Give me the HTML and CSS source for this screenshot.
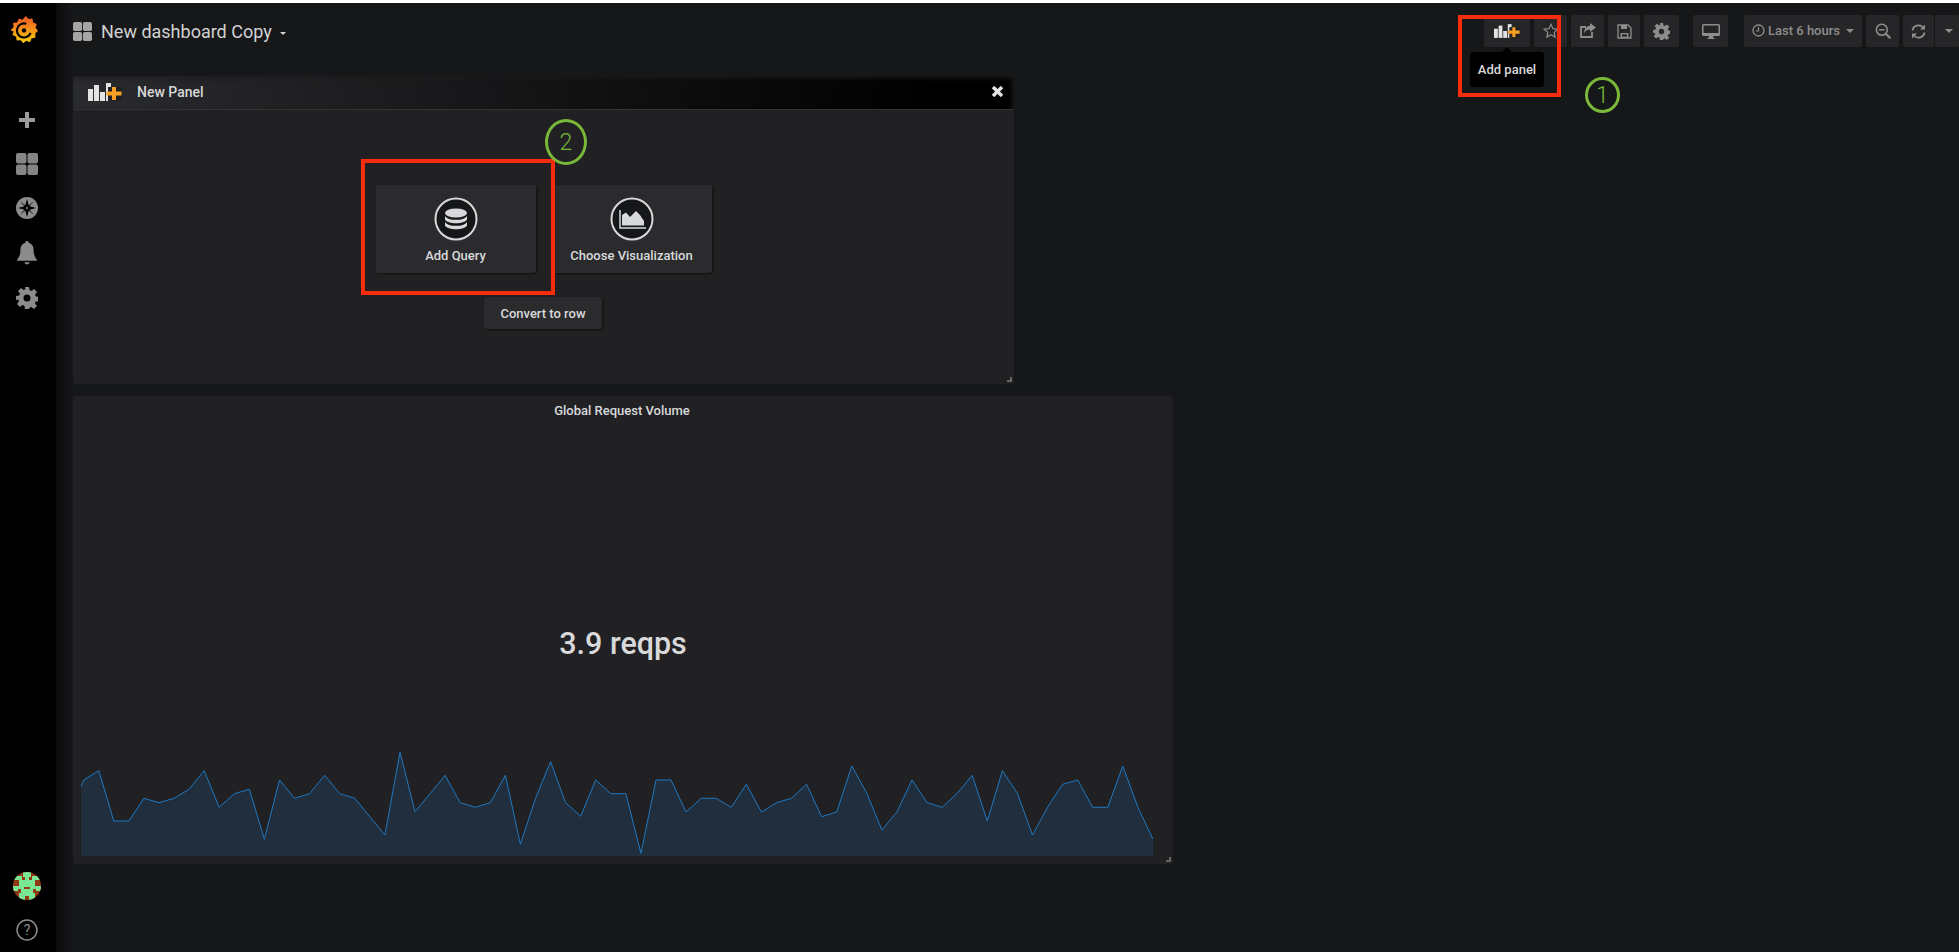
FILE: index.html
```html
<!DOCTYPE html>
<html>
	<head>
		<title>New dashboard Copy - Grafana</title>
		<link rel="stylesheet" href="styles.css">
	</head>
	<body>
		<div class="top-strip"></div>
		<div class="app">
			<aside class="sidemenu">
				<div class="side-top">
					<svg class="logo" viewBox="0 0 32 32" width="30" height="32">
						<defs><linearGradient id="logo-grad" x1="0" y1="1" x2="0" y2="0"><stop offset="0" stop-color="#fbca0a"/><stop offset="1" stop-color="#f05a28"/></linearGradient></defs>
						<path fill="url(#logo-grad)" stroke="url(#logo-grad)" stroke-width="1.500" stroke-linejoin="round" d="M18 2l2.500 3 4-.5.500 4 3.800 1.500-1.300 3.700 2.500 3-2.800 2.800.3 4-4 .7-1.500 3.800-3.700-1.500-3 2.500-2.500-3.100-4 .6-.6-4-3.700-1.500 1.300-3.700L3 16l2.700-3-.5-4 4-.6L11 4.700l3.500 1.400z"/>
						<circle cx="16" cy="16.500" r="7.500" fill="none" stroke="#000" stroke-width="2.300" stroke-dasharray="35 12" transform="rotate(20 16 16.500)"/>
						<circle cx="16" cy="16.500" r="2.300" fill="#000"/>
					</svg>
					<nav class="side-icons">
						<svg width="22" height="22" viewBox="0 0 22 22"><path fill="#9a9a9a" d="M9 3h4v6h6v4h-6v6H9v-6H3V9h6z"/></svg>
						<svg width="22" height="22" viewBox="0 0 22 22" fill="#858585"><rect width="10.500" height="10.500" rx="2"/><rect x="11.500" width="10.500" height="10.500" rx="2"/><rect y="11.500" width="10.500" height="10.500" rx="2"/><rect x="11.500" y="11.500" width="10.500" height="10.500" rx="2"/></svg>
						<svg width="22" height="22" viewBox="0 0 22 22"><circle cx="11" cy="11" r="11" fill="#8c8c8c"/><path fill="#000" d="M11 2l1.800 6.500L18 4l-4.500 5.200L20 11l-6.500 1.800L18 18l-5.200-4.500L11 20l-1.800-6.500L4 18l4.500-5.200L2 11l6.500-1.800L4 4l5.200 4.500z"/><circle cx="11" cy="11" r="1" fill="#8c8c8c"/></svg>
						<svg width="22" height="24" viewBox="0 0 18 22"><path fill="#8c8c8c" d="M9 0a1.500 1.500 0 0 1 1.500 1.700C13.500 2.400 15 5 15 8c0 5 1.500 7 3 9v1H0v-1c1.500-2 3-4 3-9 0-3 1.500-5.600 4.500-6.300A1.500 1.500 0 0 1 9 0zM6.500 19.500h5A2.600 2.600 0 0 1 9 21.500a2.600 2.600 0 0 1-2.500-2z"/></svg>
						<svg width="22" height="22" viewBox="0 0 22 22"><use href="#gear"/></svg>
					</nav>
				</div>
				<div class="side-bottom">
					<svg class="avatar" width="28" height="28" viewBox="0 0 28 28">
						<clipPath id="avatar-clip"><circle cx="14" cy="14" r="14"/></clipPath>
						<g clip-path="url(#avatar-clip)">
							<rect width="28" height="28" fill="#8f3a14"/>
							<path fill="#79e793" d="M10 0h8v5h-2v3h3V4h9v4h-6v6h6v5h-5v-2h-3v4h2v7h-6v-4h-4v4H6v-7h2v-4H5v2H0v-5h6V8H0V4h9v4h3V5h-2z"/>
							<rect x="11" y="15" width="6" height="2" fill="#8f3a14"/>
						</g>
					</svg>
					<svg width="22" height="22" viewBox="0 0 22 22"><circle cx="11" cy="11" r="10" fill="none" stroke="#8c8c8c" stroke-width="1.500"/><text class="help-mark" x="11" y="16" text-anchor="middle">?</text></svg>
				</div>
			</aside>
			<main class="dashboard">
				<header class="navbar">
					<div class="nav-title">
						<svg width="19" height="19" viewBox="0 0 22 22" fill="#a5a5a5"><rect width="10.500" height="10.500" rx="2"/><rect x="11.500" width="10.500" height="10.500" rx="2"/><rect y="11.500" width="10.500" height="10.500" rx="2"/><rect x="11.500" y="11.500" width="10.500" height="10.500" rx="2"/></svg>
						<span class="dash-name">New dashboard Copy</span>
						<span class="caret-small"></span>
					</div>
					<div class="nav-buttons">
						<button class="nav-btn btn-add">
							<svg width="26" height="18" viewBox="0 0 34 18"><use href="#add-panel-icon"/></svg>
						</button>
						<button class="nav-btn btn-star"><svg width="16" height="16" viewBox="0 0 16 16"><path fill="none" stroke="#8e8e8e" stroke-width="1.200" d="M8 1.300l2 4.400 4.800.5-3.600 3.200 1 4.700L8 11.700l-4.200 2.400 1-4.700L1.200 6.200 6 5.700z"/></svg></button>
						<button class="nav-btn btn-share"><svg width="18" height="16" viewBox="0 0 18 16"><path fill="none" stroke="#8e8e8e" stroke-width="1.800" d="M13 9v5H2V4h5"/><path fill="#8e8e8e" d="M11 0l6 4.500L11 9V6.500C8 6.500 6 8 5 10.500 5 6 7.500 3 11 2.700z"/></svg></button>
						<button class="nav-btn btn-save"><svg width="15" height="15" viewBox="0 0 15 15"><path fill="none" stroke="#8e8e8e" stroke-width="1.300" d="M1 1h10l3 3v10H1z"/><path fill="#8e8e8e" d="M4 1h6v4H4zM3.500 9h8v5h-8z"/><rect x="5" y="10.300" width="5" height="2.400" fill="#2b2b2e"/></svg></button>
						<button class="nav-btn btn-gear"><svg width="17" height="17" viewBox="0 0 22 22"><use href="#gear"/></svg></button>
						<button class="nav-btn btn-tv"><svg width="18" height="15" viewBox="0 0 18 15"><path fill="#8e8e8e" d="M1.500 0h15A1.500 1.500 0 0 1 18 1.500v9a1.500 1.500 0 0 1-1.500 1.500H11l.5 2h1v1h-7v-1h1l.5-2H1.500A1.500 1.500 0 0 1 0 10.500v-9A1.500 1.500 0 0 1 1.500 0zM1.500 1.500V9h15V1.500z"/></svg></button>
						<button class="nav-btn btn-time">
							<svg width="13" height="13" viewBox="0 0 13 13"><circle cx="6.500" cy="6.500" r="5.500" fill="none" stroke="#8e8e8e" stroke-width="1.300"/><path fill="none" stroke="#8e8e8e" stroke-width="1.200" d="M6.500 3v4H4"/></svg>
							<span>Last 6 hours</span>
							<span class="caret"></span>
						</button>
						<button class="nav-btn btn-zoom"><svg width="16" height="16" viewBox="0 0 16 16"><circle cx="6.800" cy="6.800" r="5.500" fill="none" stroke="#8e8e8e" stroke-width="1.600"/><path stroke="#8e8e8e" stroke-width="2" d="M10.800 10.800l4.500 4.500"/><path stroke="#8e8e8e" stroke-width="1.500" d="M4 6.800h5.600"/></svg></button>
						<div class="btn-group">
							<button class="nav-btn btn-refresh"><svg width="15" height="15" viewBox="0 0 15 15"><path fill="none" stroke="#8e8e8e" stroke-width="1.800" d="M1.500 6.500A6 6 0 0 1 12 3.500M13.500 8.500A6 6 0 0 1 3 11.500"/><path fill="#8e8e8e" d="M14 .5v5h-5zM1 14.500v-5h5z"/></svg></button>
							<button class="nav-btn btn-drop"><span class="caret"></span></button>
						</div>
					</div>
				</header>

				<section class="panel panel-new">
					<div class="panel-head">
						<svg width="34" height="18" viewBox="0 0 34 18"><use href="#add-panel-icon"/></svg>
						<span class="panel-head-title">New Panel</span>
						<svg class="panel-close" width="11" height="11" viewBox="0 0 11 11"><path stroke="#e4e4e4" stroke-width="3.400" d="M1 1l9 9M10 1l-9 9"/></svg>
					</div>
					<div class="panel-body">
						<div class="action-row">
							<button class="action-card">
								<svg width="44" height="44" viewBox="0 0 44 44"><circle cx="22" cy="22" r="20.500" fill="#161719" stroke="#d8d9da" stroke-width="2"/><g fill="#d8d9da"><ellipse cx="22" cy="16" rx="11" ry="4.500"/><path d="M11 19c2 3 6 3.800 11 3.800S31 22 33 19v3.500c-1.500 2.500-6 3.700-11 3.700s-9.500-1.200-11-3.700z"/><path d="M11 25c2 3 6 3.800 11 3.800S31 28 33 25v3.500c-1.500 2.500-6 3.700-11 3.700s-9.500-1.200-11-3.700z"/></g></svg>
								<span>Add Query</span>
							</button>
							<button class="action-card">
								<svg width="44" height="44" viewBox="0 0 44 44"><circle cx="22" cy="22" r="20.500" fill="#161719" stroke="#d8d9da" stroke-width="2"/><path fill="#d8d9da" d="M12 28.500V18l4-2.500 4 4.500 6-6 4 4 4 6v4.500z"/><path fill="none" stroke="#d8d9da" stroke-width="1.500" d="M10 13v18h26"/></svg>
								<span>Choose Visualization</span>
							</button>
						</div>
						<button class="row-btn">Convert to row</button>
					</div>
					<span class="resize-handle"></span>
				</section>

				<section class="panel panel-stat">
					<div class="stat-title">Global Request Volume</div>
					<div class="stat-value">3.9 reqps</div>
					<svg class="spark" width="1072" height="116" viewBox="0 0 1072 116">
						<polygon fill="#1f78c1" fill-opacity=".16" points="0,116 0,46.700 2.700,40 17.800,30.700 32.800,81 47.900,81 62.900,58.300 78,62.700 93.100,58.300 108.100,49.300 123.200,30.700 138.200,67.300 153.300,53.700 168.400,49.300 183.400,99.300 198.500,40 213.500,58.300 228.600,53.700 243.700,35.300 258.700,53.700 273.800,58.300 288.800,76.700 303.900,95 319,12.300 334,71.700 349.100,53.700 364.100,35.300 379.200,62.700 394.300,67.300 409.300,62.700 424.400,35.300 439.400,104.300 454.500,58.300 469.600,21.700 484.600,62.700 499.700,76.300 514.700,40 529.800,53.700 544.900,53.700 559.900,113.300 575,40 590,40 605.100,72 620.200,58.300 635.200,58.300 650.300,67.300 665.300,44.300 680.400,72 695.500,62.700 710.500,58.300 725.600,44.300 740.600,76.700 755.700,72 770.800,26 785.800,53.300 800.900,90 815.900,72 831,40 846.100,62.700 861.100,67.300 876.200,53.300 891.200,35.300 906.300,81 921.400,30.700 936.400,53.300 951.500,95 966.500,67.300 981.600,44.300 996.700,40 1011.700,67.300 1026.800,67.300 1041.800,26 1056.900,67.300 1072,99.300 1072,116"/>
						<polyline fill="none" stroke="#1f78c1" stroke-width="1" points="0,46.700 2.700,40 17.800,30.700 32.800,81 47.900,81 62.900,58.300 78,62.700 93.100,58.300 108.100,49.300 123.200,30.700 138.200,67.300 153.300,53.700 168.400,49.300 183.400,99.300 198.500,40 213.500,58.300 228.600,53.700 243.700,35.300 258.700,53.700 273.800,58.300 288.800,76.700 303.900,95 319,12.300 334,71.700 349.100,53.700 364.100,35.300 379.200,62.700 394.300,67.300 409.300,62.700 424.400,35.300 439.400,104.300 454.500,58.300 469.600,21.700 484.600,62.700 499.700,76.300 514.700,40 529.800,53.700 544.900,53.700 559.900,113.300 575,40 590,40 605.100,72 620.200,58.300 635.200,58.300 650.300,67.300 665.300,44.300 680.400,72 695.500,62.700 710.500,58.300 725.600,44.300 740.600,76.700 755.700,72 770.800,26 785.800,53.300 800.900,90 815.900,72 831,40 846.100,62.700 861.100,67.300 876.200,53.300 891.200,35.300 906.300,81 921.400,30.700 936.400,53.300 951.500,95 966.500,67.300 981.600,44.300 996.700,40 1011.700,67.300 1026.800,67.300 1041.800,26 1056.900,67.300 1072,99.300"/>
					</svg>
					<span class="resize-handle"></span>
				</section>
			</main>
		</div>

		<!-- tooltip and the screenshot's annotations lie over the page -->
		<div class="tooltip">Add panel</div>
		<div class="mark-box mark-box-1"></div>
		<div class="mark-box mark-box-2"></div>
		<div class="mark-num mark-num-1">1</div>
		<div class="mark-num mark-num-2">2</div>

		<svg class="icon-defs" width="0" height="0">
			<defs>
				<g id="add-panel-icon">
					<g fill="#e3e3e3"><rect x="0" y="6" width="5" height="12"/><rect x="6" y="2" width="5" height="16" fill="#e3e3e3"/><rect x="12" y="9" width="5" height="9"/><rect x="18" y="0" width="5" height="18"/></g>
					<rect x="20" y="4" width="14" height="14" fill="#212124"/>
					<path fill="#f79f20" d="M24 4h4v4.500h5.500v4H28V17h-4v-4.500h-5.500v-4H24z"/>
				</g>
				<path id="gear" fill="#8c8c8c" fill-rule="evenodd" d="M9 0h4l.6 3.300 1.800.7L18.200 2 21 5l-2 2.700.8 1.800 3.200.5v4l-3.200.6-.8 1.800 2 2.700-3 2.900-2.700-2-1.800.8L13 22H9l-.6-3.200-1.800-.8-2.700 2-2.900-3 2-2.700-.8-1.700L0 13V9l3.200-.6.800-1.800L2 3.900 5 1l2.700 2 1.700-.7zM11 7.500a3.500 3.500 0 1 0 0 7 3.500 3.500 0 0 0 0-7z"/>
			</defs>
		</svg>
	</body>
</html>
```

FILE: styles.css
```css
* {
	margin: 0;
	padding: 0;
	box-sizing: border-box;
}
html,body {
	width: 100%;
	height: 100%;
	overflow: hidden;
	background: #161719;
	color: #d8d9da;
	font-family: Roboto, "Liberation Sans", sans-serif;
}
button {
	font-family: inherit;
	color: inherit;
	border: 0;
	background: none;
}
.icon-defs {
	position: absolute;
}

.top-strip {
	height: 3px;
	background: #fff;
}
.app {
	display: flex;
	height: 949px;
}

/* side menu */
.sidemenu {
	width: 56px;
	flex: none;
	background: #000;
	display: flex;
	flex-direction: column;
	justify-content: space-between;
	align-items: center;
	padding-right: 2px;
}
.side-top {
	display: flex;
	flex-direction: column;
	align-items: center;
}
.logo {
	margin-top: 11px;
	margin-right: 7px;
}
.side-icons {
	display: flex;
	flex-direction: column;
	align-items: center;
	gap: 22px;
	margin-top: 63px;
}
.side-bottom {
	display: flex;
	flex-direction: column;
	align-items: center;
	gap: 19px;
	padding-bottom: 11px;
}
.help-mark {
	font-family: Roboto, sans-serif;
	font-size: 14px;
	fill: #8c8c8c;
}

/* dashboard */
.dashboard {
	flex: 1;
	min-width: 0;
	padding-left: 17px;
	background: linear-gradient(90deg, #0b0b0c, #161719 16px);
}
.navbar {
	height: 73px;
	display: flex;
	justify-content: space-between;
	align-items: flex-start;
}
.nav-title {
	display: flex;
	align-items: center;
	margin-top: 18px;
}
.dash-name {
	margin-left: 9px;
	font-size: 18px;
	color: #d2d2d2;
}
.caret-small {
	margin: 3px 0 0 8px;
	border-top: 3px solid #d2d2d2;
	border-left: 3px solid transparent;
	border-right: 3px solid transparent;
}
.nav-buttons {
	display: flex;
	align-items: flex-start;
	margin-top: 12px;
}
.nav-btn {
	height: 32px;
	display: flex;
	align-items: center;
	justify-content: center;
	background: #262628;
	border-radius: 2px;
}
.btn-add {
	width: 46px;
	margin-right: 4px;
}
.btn-star {
	width: 33px;
	margin-right: 4px;
}
.btn-share {
	width: 33px;
	margin-right: 4px;
}
.btn-save {
	width: 32px;
	margin-right: 4px;
}
.btn-gear {
	width: 35px;
	margin-right: 14px;
}
.btn-tv {
	width: 35px;
	margin-right: 16px;
}
.btn-time {
	width: 118px;
	margin-right: 4px;
	padding-bottom: 1px;
	gap: 3px;
	font-size: 13px;
	font-weight: 500;
	color: #8e8e8e;
}
.btn-zoom {
	width: 33px;
	margin-right: 4px;
}
.btn-group {
	display: flex;
}
.btn-refresh {
	width: 31px;
}
.btn-drop {
	width: 25px;
	border-left: 1px solid #161719;
}
.caret {
	margin-left: 3px;
	border-top: 4px solid #8e8e8e;
	border-left: 4px solid transparent;
	border-right: 4px solid transparent;
}

/* panels */
.panel {
	position: relative;
	background: #212124;
	border-radius: 3px;
}
.panel-new {
	width: 941px;
	height: 308px;
	margin-bottom: 12px;
}
.panel-stat {
	width: 1100px;
	height: 468px;
}
.panel-head {
	height: 34px;
	display: flex;
	align-items: center;
	padding-left: 15px;
	padding-bottom: 2px;
	background: linear-gradient(90deg, #2a2b2e, #000 92%);
	border-bottom: 1px solid #333;
	box-shadow: inset -3px 3px 5px -1px rgba(28, 28, 30, .9);
}
.panel-head-title {
	margin-left: 15px;
	font-size: 14px;
	font-weight: 500;
	color: #d8d9da;
}
.panel-close {
	margin-left: auto;
	margin-right: 11px;
}
.panel-body {
	display: flex;
	flex-direction: column;
	align-items: center;
	padding-top: 75px;
}
.action-row {
	display: flex;
	gap: 16px;
}
.action-card {
	width: 160px;
	height: 88px;
	display: flex;
	flex-direction: column;
	align-items: center;
	justify-content: flex-start;
	padding-top: 12px;
	gap: 7px;
	font-size: 13px;
	font-weight: 500;
	background: #2b2b2e;
	border-radius: 3px;
	box-shadow: 1px 1px 2px #111;
}
.row-btn {
	width: 118px;
	height: 32px;
	margin-top: 24px;
	margin-right: 1px;
	font-size: 13px;
	font-weight: 500;
	background: #2b2b2e;
	border-radius: 3px;
	box-shadow: 1px 1px 2px #111;
}
.resize-handle {
	position: absolute;
	right: 2px;
	bottom: 2px;
	width: 5px;
	height: 5px;
	border-right: 2px solid #666;
	border-bottom: 2px solid #666;
}
.stat-title {
	padding-top: 7px;
	padding-right: 2px;
	text-align: center;
	font-size: 13px;
	font-weight: 500;
	line-height: 16px;
}
.stat-value {
	margin-top: 208px;
	text-align: center;
	font-size: 30.500px;
	font-weight: 500;
	line-height: 34px;
}
.spark {
	position: absolute;
	left: 8px;
	bottom: 8px;
}

/* tooltip and annotations */
.tooltip {
	position: absolute;
	left: 1470px;
	top: 52px;
	width: 74px;
	height: 35px;
	line-height: 35px;
	text-align: center;
	font-size: 13px;
	font-weight: 500;
	background: #000;
	border-radius: 3px;
}
.tooltip::before {
	content: "";
	position: absolute;
	left: 32px;
	top: -5px;
	border-bottom: 5px solid #000;
	border-left: 5px solid transparent;
	border-right: 5px solid transparent;
}
.mark-box {
	position: absolute;
	border: 4px solid #f92d0c;
}
.mark-box-1 {
	left: 1458px;
	top: 15px;
	width: 103px;
	height: 82px;
}
.mark-box-2 {
	left: 361px;
	top: 159px;
	width: 194px;
	height: 136px;
}
.mark-num {
	position: absolute;
	display: flex;
	align-items: center;
	justify-content: center;
	border: 3.500px solid #7ab83a;
	border-radius: 50%;
	font-size: 23px;
	font-weight: 300;
	color: #7ab83a;
}
.mark-num-1 {
	left: 1585px;
	top: 77px;
	width: 35px;
	height: 36px;
}
.mark-num-2 {
	left: 545px;
	top: 119px;
	width: 42px;
	height: 46px;
}
```
